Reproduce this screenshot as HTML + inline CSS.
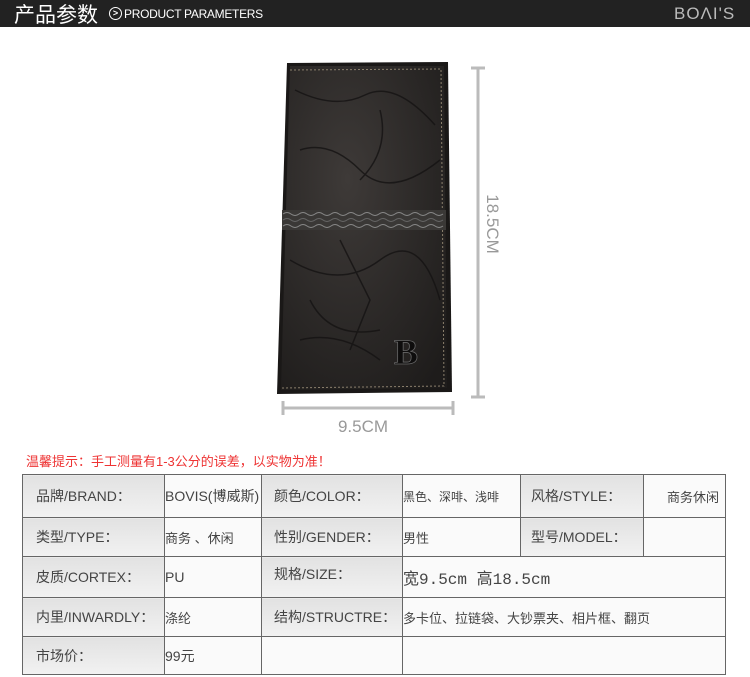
<!DOCTYPE html>
<html><head><meta charset="utf-8"><style>
body{margin:0;width:750px;height:677px;background:#fff;position:relative;overflow:hidden;font-family:"Liberation Sans","Noto Sans CJK SC",sans-serif}
.hdr{position:absolute;left:0;top:0;width:750px;height:27px;background:#222}
.abs{position:absolute;white-space:nowrap}
table{position:absolute;left:22px;top:474px;border-collapse:collapse;font-size:14px;color:#444;table-layout:fixed}
td{border:1px solid #666;padding:0;vertical-align:middle;overflow:hidden;white-space:nowrap}
.g{background:linear-gradient(#e2e2e2,#f2f2f2)}
.w{background:#fafafa}
</style></head><body>
<div class="hdr"></div>
<div class="abs" style="left:14px;top:1px;color:#fff;font-size:21px;font-family:'Noto Sans CJK SC',sans-serif;line-height:26px">产品参数</div>
<div class="abs" style="left:109px;top:7px;width:11px;height:11px;border:1px solid #fff;border-radius:50%;color:#fff;font-size:9px;line-height:11px;text-align:center;font-weight:bold">&gt;</div>
<div class="abs" style="left:124px;top:7px;color:#fff;font-size:12px;letter-spacing:-0.3px">PRODUCT PARAMETERS</div>
<div class="abs" style="left:674px;top:4px;color:#bbb;font-size:17px;letter-spacing:1px">BOΛI'S</div>

<svg class="abs" style="left:0;top:0" width="750" height="440">
<defs><radialGradient id="lg" cx="0.4" cy="0.35" r="0.8"><stop offset="0" stop-color="#3e3a38"/><stop offset="1" stop-color="#1e1c1b"/></radialGradient></defs>
<polygon points="287,63 448,62 452,392 277,394" fill="#1a1817"/>
<polygon points="290,66 444,66 447,388 281,390" fill="url(#lg)"/>
<g stroke="#151313" stroke-width="1.5" fill="none" opacity="0.8">
<path d="M295,90 q40,20 70,5 t70,30"/><path d="M300,150 q30,-10 60,20 t80,-10"/><path d="M290,260 q50,30 90,0 t60,40"/><path d="M310,300 q20,40 70,30"/><path d="M340,240 l30,60 l-20,50"/><path d="M300,340 q40,-10 80,20"/><path d="M380,110 q10,40 -20,70"/>
</g>
<polyline points="290,70 441,69 444,386 282,388" fill="none" stroke="#8a7f6c" stroke-width="1" stroke-dasharray="2,2"/>
<rect x="282" y="210" width="164" height="20" fill="#3a3836"/>
<path d="M283,214 q4,-3 8,0 t8,0 t8,0 t8,0 t8,0 t8,0 t8,0 t8,0 t8,0 t8,0 t8,0 t8,0 t8,0 t8,0 t8,0 t8,0 t8,0 t8,0 t8,0 t8,0" fill="none" stroke="#888" stroke-width="1"/>
<path d="M283,220 q4,-3 8,0 t8,0 t8,0 t8,0 t8,0 t8,0 t8,0 t8,0 t8,0 t8,0 t8,0 t8,0 t8,0 t8,0 t8,0 t8,0 t8,0 t8,0 t8,0 t8,0" fill="none" stroke="#666" stroke-width="1"/>
<path d="M283,226 q4,-3 8,0 t8,0 t8,0 t8,0 t8,0 t8,0 t8,0 t8,0 t8,0 t8,0 t8,0 t8,0 t8,0 t8,0 t8,0 t8,0 t8,0 t8,0 t8,0 t8,0" fill="none" stroke="#888" stroke-width="1"/>
<text x="394" y="364" font-family="Liberation Serif,serif" font-size="36" font-weight="bold" fill="#0e0d0d" stroke="#666" stroke-width="0.8">B</text>
<g stroke="#bbb" stroke-width="3" fill="none">
<line x1="478" y1="68" x2="478" y2="397"/><line x1="471" y1="68" x2="485" y2="68"/><line x1="471" y1="397" x2="485" y2="397"/>
<line x1="283" y1="408" x2="453" y2="408"/><line x1="283" y1="401" x2="283" y2="415"/><line x1="453" y1="401" x2="453" y2="415"/>
</g>
<text x="363" y="432" text-anchor="middle" font-size="17" fill="#999">9.5CM</text>
<text x="487" y="224" text-anchor="middle" font-size="17" fill="#999" transform="rotate(90 487 224)">18.5CM</text>
</svg>

<div class="abs" style="left:26px;top:451px;color:#e33;font-size:13px">温馨提示：手工测量有1-3公分的误差，以实物为准！</div>

<table>
<colgroup><col style="width:142px"><col style="width:97px"><col style="width:141px"><col style="width:118px"><col style="width:123px"><col style="width:82px"></colgroup>
<tr style="height:43px"><td class="g" style="padding-left:13px">品牌/BRAND：</td><td class="w">BOVIS(博威斯)</td><td class="g" style="padding-left:12px">颜色/COLOR：</td><td class="w" style="font-size:12px">黑色、深啡、浅啡</td><td class="g" style="padding-left:10px">风格/STYLE：</td><td class="w" style="text-align:right;padding-right:6px;font-size:13px">商务休闲</td></tr>
<tr style="height:39px"><td class="g" style="padding-left:13px">类型/TYPE：</td><td class="w" style="font-size:13px">商务 、休闲</td><td class="g" style="padding-left:12px">性别/GENDER：</td><td class="w" style="font-size:13px">男性</td><td class="g" style="padding-left:10px">型号/MODEL：</td><td class="w"></td></tr>
<tr style="height:41px"><td class="g" style="padding-left:13px">皮质/CORTEX：</td><td class="w">PU</td><td class="g" style="padding-left:12px;vertical-align:top;line-height:34px">规格/SIZE：</td><td class="w" colspan="3" style="font-size:16px;font-family:'Liberation Mono','Noto Sans CJK SC',monospace">宽9.5cm 高18.5cm</td></tr>
<tr style="height:39px"><td class="g" style="padding-left:13px">内里/INWARDLY：</td><td class="w" style="font-size:13px">涤纶</td><td class="g" style="padding-left:12px">结构/STRUCTRE：</td><td class="w" colspan="3" style="font-size:13px">多卡位、拉链袋、大钞票夹、相片框、翻页</td></tr>
<tr style="height:38px"><td class="g" style="padding-left:13px">市场价：</td><td class="w">99元</td><td class="w"></td><td class="w" colspan="3"></td></tr>
</table>
</body></html>
